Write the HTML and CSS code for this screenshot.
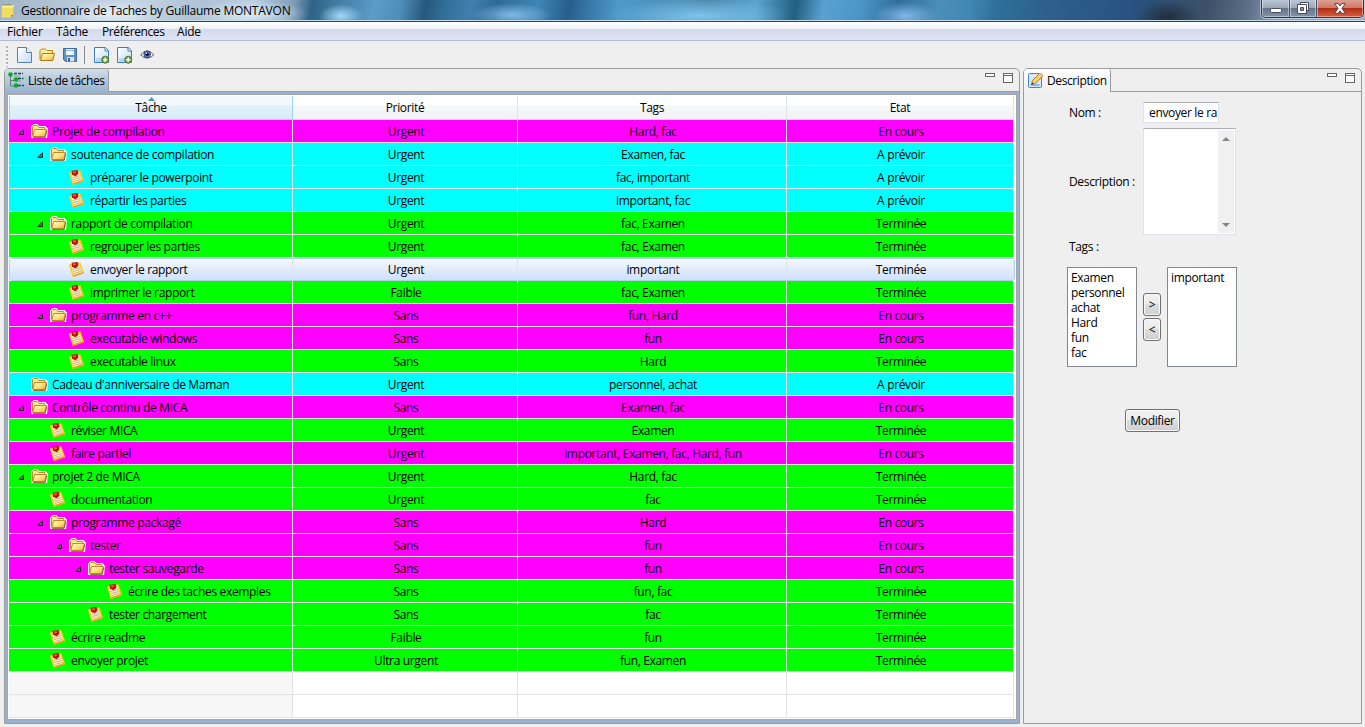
FILE: index.html
```html
<!DOCTYPE html>
<html lang="fr">
<head>
<meta charset="utf-8">
<title>Gestionnaire de Taches</title>
<link rel="stylesheet" href="styles.css">
</head>
<body>
<svg class="defs" width="0" height="0">
  <defs>
    <linearGradient id="gold" x1="0" y1="0" x2="1" y2="1"><stop offset="0" stop-color="#fffbd0"/><stop offset=".55" stop-color="#ffdf7a"/><stop offset="1" stop-color="#e5a92c"/></linearGradient>
    <linearGradient id="paper" x1="0" y1="0" x2="1" y2="1"><stop offset="0" stop-color="#fff"/><stop offset="1" stop-color="#c4dcf8"/></linearGradient>
    <symbol id="folder" viewBox="0 0 17 15">
      <path d="M.5 13.500V2.500L2.500.5h4l1.500 2h6.500l1.800 2-.6 9z" fill="#fff" stroke="#fff"/>
      <path d="M1.500 12V2.800L2.800 1.500h3.500L7.800 3.500h6V6" fill="#ffe98e" stroke="#bd8c2c"/>
      <path d="M1.700 12.500 3.600 5.500h11.800l-1.400 7z" fill="url(#gold)" stroke="#bd8c2c"/>
      <path d="M2.200 13.400h12l1.500-7" fill="none" stroke="#7a5a20" stroke-width=".9"/>
    </symbol>
    <symbol id="note" viewBox="0 0 15 15">
      <path d="M.9 3.200 10.800 1.200l3.300 9.500L4.300 14z" fill="#fff6d0" stroke="#ffc928" stroke-width="1.700"/>
      <path d="M4.300 14.200 14.200 10.700" stroke="#ef9a1a" stroke-width="1.400"/>
      <path d="m3.500 7.500 7.500-1.800M4.100 9.500l7.600-1.900M4.900 11.500l7.500-2.200" stroke="#b79d6b" stroke-width=".8"/>
      <path d="M2.600.8 8.600 0l.9 3.800-2.900 2.500-3.600-1.600z" fill="#b91305"/>
      <path d="M3.700 1.200h3l.4 1.800-2.600.6z" fill="#f05b36"/>
    </symbol>
    <symbol id="arrow" viewBox="0 0 6 6"><path d="M5.500.7v4.800H.9z" fill="#686868" stroke="#1c1c1c" stroke-width=".9"/></symbol>
    <symbol id="newtask" viewBox="0 0 17 17">
      <path d="M1.500.5h11l3 3v12h-14z" fill="url(#paper)" stroke="#3d7cc0"/>
      <path d="M12 .5v3.500h3.500" fill="#fff" stroke="#3d7cc0"/>
      <path d="M3 12h8M3 14h7" stroke="#8dbdf0"/>
      <circle cx="12.200" cy="12.700" r="3.500" fill="#6a9c3e" stroke="#4f7d32"/>
      <path d="M12.200 10.500v4.400M10 12.700h4.400" stroke="#fff" stroke-width="1.500"/>
    </symbol>
  </defs>
</svg>
<div class="window">
  <header class="titlebar">
    <svg class="app-icon" width="13" height="15" viewBox="0 0 13 15"><path d="M1 2h11.500l-.5 10-2 2.500H.5z" fill="#f3dc62"/><path d="M1 2h11.500v2.500H1z" fill="#fff0a0"/><path d="M10 14.500V12h2z" fill="#a98718"/><path d="M2 1v2M4 1v2M6 1v2M8 1v2M10 1v2" stroke="#a08a3a"/></svg>
    <span class="caption">Gestionnaire de Taches by Guillaume MONTAVON</span>
    <div class="controls">
      <span class="ctl min"><svg width="12" height="6"><rect x=".5" y=".5" width="11" height="4" rx="1" fill="#fff" stroke="#484d5c"/></svg></span>
      <span class="ctl max"><svg width="12" height="12"><path d="M3.500.5h8v8h-8z" fill="#fff" stroke="#484d5c"/><path d="M.5 2.500h9v9h-9z" fill="#fff" stroke="#484d5c"/><path d="M3.500 5.500h3v3h-3z" fill="#8694a7" stroke="#484d5c"/></svg></span>
      <span class="ctl close"><svg width="12" height="11"><path d="M.7.7h3.600L6 3 7.700.7h3.600L8 5.400l3.300 4.900H7.700L6 7.800l-1.700 2.500H.7L4 5.400z" fill="#fff" stroke="#57424c"/></svg></span>
    </div>
  </header>
  <nav class="menubar"><span class="m1">Fichier</span><span class="m2">Tâche</span><span class="m3">Préférences</span><span>Aide</span></nav>
  <div class="toolbar">
    <svg class="grip" width="3" height="21"><path d="M1 0v21" stroke="#b4b4b4" stroke-width="2" stroke-dasharray="2 2"/></svg>
    <svg class="tb-new" width="15" height="17"><path d="M.5.5h9l5 5v10H.5z" fill="url(#paper)" stroke="#5b7fa8"/><path d="M9.500.5v5h5" fill="#fff" stroke="#5b7fa8"/></svg>
    <svg class="tb-open" width="16" height="14"><path d="M1 11.500V2.500L2.500 1h4L8 2.500h5.500V5" fill="#ffefa2" stroke="#b8860b"/><path d="M1.500 12.500 3.500 5.500h12L13.800 12.500z" fill="url(#gold)" stroke="#b07d10"/></svg>
    <svg class="tb-save" width="15" height="15"><path d="M.5.5h13v13h-11l-2-2z" fill="#5f93c8" stroke="#3d6b9f"/><path d="M3 1h8v6H3z" fill="#eef4fa"/><path d="M3 2.500h8" stroke="#8bb4de"/><path d="M4 9h7v4.500H4z" fill="#dce3ea"/><path d="M5 10h2v3.500H5z" fill="#315c8c"/></svg>
    <i class="separator"></i>
    <svg class="tb-add" width="17" height="17"><use href="#newtask"/></svg>
    <svg class="tb-add2" width="17" height="17"><use href="#newtask"/></svg>
    <svg class="tb-eye" width="15" height="12"><path d="M.7 5.800Q7.200-2 13.800 5.800 7.200 12.500.7 5.800z" fill="#fff" stroke="#555"/><circle cx="7.200" cy="5.300" r="3.300" fill="#6d80cc" stroke="#323d85"/><circle cx="7.200" cy="5.300" r="1.700" fill="#080d30"/><circle cx="6.400" cy="4.200" r=".7" fill="#fff"/></svg>
  </div>
  <main class="workspace">
    <section class="view list-view">
      <div class="tabbar">
        <div class="tab"><svg width="16" height="16"><path d="M2.500 4v10H6M2.500 8.500H6" fill="none" stroke="#5f7f78"/><path d="M6 1.500h9M10 6.500h5.500M10 13.500h6" stroke="#174f4d" stroke-width="1.300" stroke-dasharray="3 1"/><path d="M6 4h6M10 9h3" stroke="#78a49c"/><circle cx="2.500" cy="2.500" r="2.300" fill="#12a52b"/><circle cx="8" cy="7.500" r="2.300" fill="#12a52b"/><circle cx="8" cy="13.500" r="2.300" fill="#12a52b"/></svg><span>Liste de tâches</span></div>
        <div class="view-buttons"><i class="vmin"></i><i class="vmax"></i></div>
      </div>
      <div class="frame"><div class="table">
        <div class="row head"><div class="sorted">Tâche<svg class="sort" width="7" height="4"><path d="M3.500 0 7 4H0z" fill="#5590ad"/></svg></div><div>Priorité</div><div>Tags</div><div>Etat</div></div>
        <div class="row doing"><div class="d0"><svg class="a"><use href="#arrow"/></svg><svg class="f"><use href="#folder"/></svg>Projet de compilation</div><div>Urgent</div><div>Hard, fac</div><div>En cours</div></div>
        <div class="row todo"><div class="d1"><svg class="a"><use href="#arrow"/></svg><svg class="f"><use href="#folder"/></svg>soutenance de compilation</div><div>Urgent</div><div>Examen, fac</div><div>A prévoir</div></div>
        <div class="row todo"><div class="d2"><svg class="n"><use href="#note"/></svg>préparer le powerpoint</div><div>Urgent</div><div>fac, important</div><div>A prévoir</div></div>
        <div class="row todo"><div class="d2"><svg class="n"><use href="#note"/></svg>répartir les parties</div><div>Urgent</div><div>important, fac</div><div>A prévoir</div></div>
        <div class="row done"><div class="d1"><svg class="a"><use href="#arrow"/></svg><svg class="f"><use href="#folder"/></svg>rapport de compilation</div><div>Urgent</div><div>fac, Examen</div><div>Terminée</div></div>
        <div class="row done"><div class="d2"><svg class="n"><use href="#note"/></svg>regrouper les parties</div><div>Urgent</div><div>fac, Examen</div><div>Terminée</div></div>
        <div class="row selected"><div class="d2"><svg class="n"><use href="#note"/></svg>envoyer le rapport</div><div>Urgent</div><div>important</div><div>Terminée</div></div>
        <div class="row done"><div class="d2"><svg class="n"><use href="#note"/></svg>imprimer le rapport</div><div>Faible</div><div>fac, Examen</div><div>Terminée</div></div>
        <div class="row doing"><div class="d1"><svg class="a"><use href="#arrow"/></svg><svg class="f"><use href="#folder"/></svg>programme en c++</div><div>Sans</div><div>fun, Hard</div><div>En cours</div></div>
        <div class="row doing"><div class="d2"><svg class="n"><use href="#note"/></svg>executable windows</div><div>Sans</div><div>fun</div><div>En cours</div></div>
        <div class="row done"><div class="d2"><svg class="n"><use href="#note"/></svg>executable linux</div><div>Sans</div><div>Hard</div><div>Terminée</div></div>
        <div class="row todo"><div class="d0"><svg class="f"><use href="#folder"/></svg>Cadeau d'anniversaire de Maman</div><div>Urgent</div><div>personnel, achat</div><div>A prévoir</div></div>
        <div class="row doing"><div class="d0"><svg class="a"><use href="#arrow"/></svg><svg class="f"><use href="#folder"/></svg>Contrôle continu de MICA</div><div>Sans</div><div>Examen, fac</div><div>En cours</div></div>
        <div class="row done"><div class="d1"><svg class="n"><use href="#note"/></svg>réviser MICA</div><div>Urgent</div><div>Examen</div><div>Terminée</div></div>
        <div class="row doing"><div class="d1"><svg class="n"><use href="#note"/></svg>faire partiel</div><div>Urgent</div><div>important, Examen, fac, Hard, fun</div><div>En cours</div></div>
        <div class="row done"><div class="d0"><svg class="a"><use href="#arrow"/></svg><svg class="f"><use href="#folder"/></svg>projet 2 de MICA</div><div>Urgent</div><div>Hard, fac</div><div>Terminée</div></div>
        <div class="row done"><div class="d1"><svg class="n"><use href="#note"/></svg>documentation</div><div>Urgent</div><div>fac</div><div>Terminée</div></div>
        <div class="row doing"><div class="d1"><svg class="a"><use href="#arrow"/></svg><svg class="f"><use href="#folder"/></svg>programme packagé</div><div>Sans</div><div>Hard</div><div>En cours</div></div>
        <div class="row doing"><div class="d2"><svg class="a"><use href="#arrow"/></svg><svg class="f"><use href="#folder"/></svg>tester</div><div>Sans</div><div>fun</div><div>En cours</div></div>
        <div class="row doing"><div class="d3"><svg class="a"><use href="#arrow"/></svg><svg class="f"><use href="#folder"/></svg>tester sauvegarde</div><div>Sans</div><div>fun</div><div>En cours</div></div>
        <div class="row done"><div class="d4"><svg class="n"><use href="#note"/></svg>écrire des taches exemples</div><div>Sans</div><div>fun, fac</div><div>Terminée</div></div>
        <div class="row done"><div class="d3"><svg class="n"><use href="#note"/></svg>tester chargement</div><div>Sans</div><div>fac</div><div>Terminée</div></div>
        <div class="row done"><div class="d1"><svg class="n"><use href="#note"/></svg>écrire readme</div><div>Faible</div><div>fun</div><div>Terminée</div></div>
        <div class="row done"><div class="d1"><svg class="n"><use href="#note"/></svg>envoyer projet</div><div>Ultra urgent</div><div>fun, Examen</div><div>Terminée</div></div>
        <div class="row empty"><div></div><div></div><div></div><div></div></div>
        <div class="row empty"><div></div><div></div><div></div><div></div></div>
      </div></div>
    </section>
    <section class="view detail-view">
      <div class="tabbar">
        <div class="tab"><svg width="16" height="16"><rect x=".5" y="1.500" width="13" height="14" rx="1" fill="#d6eafc" stroke="#3f83d0"/><path d="M2.500 13h9" stroke="#78bdf5" stroke-width="2"/><path d="m3.500 12.500 1-4L12 1l3 2.800-7.500 7.500z" fill="#f8cf63" stroke="#a97a35"/><path d="m11 2 1.200-1.200 3 2.800L14 5z" fill="#efb49c"/><path d="m3.500 12.500.6-2 1.500 1.400z" fill="#222"/></svg><span>Description</span></div>
        <div class="view-buttons"><i class="vmin"></i><i class="vmax"></i></div>
      </div>
      <div class="form">
        <div class="field name-field"><label>Nom :</label><div class="input">envoyer le ra</div></div>
        <div class="field desc-field"><label>Description :</label><div class="textarea"><div class="scroll"><svg width="8" height="4"><path d="M4 0 8 4H0z" fill="#858585"/></svg><svg width="8" height="4"><path d="M0 0h8L4 4z" fill="#858585"/></svg></div></div></div>
        <div class="tags-label">Tags :</div>
        <div class="pickers">
          <ul class="listbox"><li>Examen</li><li>personnel</li><li>achat</li><li>Hard</li><li>fun</li><li>fac</li></ul>
          <div class="movers"><div class="btn">&gt;</div><div class="btn">&lt;</div></div>
          <ul class="listbox"><li>important</li></ul>
        </div>
        <div class="btn submit">Modifier</div>
      </div>
    </section>
  </main>
</div>
</body>
</html>
```
FILE: styles.css
```css
* { box-sizing: border-box; }
body { margin: 0; background: #efefef; color: #000; font: 12px/15px "Open Sans", "Noto Sans", sans-serif; letter-spacing: -0.34px; }
svg { display: block; flex: none; }
.defs { position: absolute; }
.window { width: 1365px; height: 727px; display: flex; flex-direction: column; overflow: hidden; white-space: nowrap; }

.titlebar {
  height: 22px; display: flex; align-items: flex-start; padding-left: 1px;
  border-bottom: 1px solid #2f4459; box-shadow: inset 0 -1px #c5dbea;
  background:
    radial-gradient(ellipse 60px 14px at 250px 14px, rgba(225,240,252,.8), rgba(225,240,252,0)),
    radial-gradient(ellipse 50px 14px at 110px 14px, rgba(235,243,250,.8), rgba(235,243,250,0)),
    radial-gradient(ellipse 22px 12px at 341px 16px, #a5d8f8, rgba(165,216,248,0)),
    radial-gradient(ellipse 40px 12px at 512px 15px, #82b9e5, rgba(130,185,229,0)),
    radial-gradient(ellipse 90px 18px at 700px 16px, #7cc4ee, rgba(124,196,238,0)),
    radial-gradient(ellipse 32px 14px at 905px 16px, #84b7ea, rgba(132,183,234,0)),
    radial-gradient(ellipse 32px 16px at 1168px 17px, #222e3e, rgba(34,46,62,0)),
    linear-gradient(100deg, #a0b4c6 0, #b3c6d8 60px, #c6d6e5 130px, #aec2d6 200px, #b9cde0 250px, #7f9db8 290px, #2d6487 308px, #3f7aa0 330px, #5b9cc8 370px, #4f8dba 396px, #25597a 420px, #316f9b 440px, #427fae 465px, #2f6a94 490px, #3f86b5 530px, #265f8c 562px, #3a7cac 585px, #4c99c9 610px, #4c8fb8 660px, #4b83a5 700px, #5aa5d0 745px, #235f80 785px, #5aa0d2 812px, #4b94c8 850px, #2f6e98 885px, #4a8fb8 925px, #4288b6 955px, #2c6f98 985px, #2f608c 1030px, #285383 1110px, #2d4e72 1140px, #3d5068 1190px, #5c6e86 1230px, #8aa0b8 1262px, #a0b4ca 1365px);
}
.app-icon { margin-top: 3px; }
.caption { margin: 3px 0 0 7px; letter-spacing: -.23px; }
.controls { margin: 0 1px 0 auto; display: flex; height: 18px; border: 1px solid #2e3947; border-top: 0; border-radius: 0 0 5px 5px; overflow: hidden; box-shadow: 0 0 0 1px rgba(220,233,245,.6); }
.ctl { display: flex; align-items: center; justify-content: center; border-left: 1px solid #46536a; box-shadow: inset 1px 0 rgba(255,255,255,.45), inset -1px -1px rgba(255,255,255,.4); background: linear-gradient(#bac6d3 0, #9aa9ba 47%, #65758b 50%, #8295ad 100%); }
.ctl.min { width: 27px; border-left: 0; padding-top: 4px; }
.ctl.max { width: 27px; padding-bottom: 1px; }
.ctl.close { width: 47px; padding-bottom: 1px; background: linear-gradient(#dba092 0, #cf7764 47%, #b52d17 50%, #d6603f 100%); }

.menubar { height: 19px; display: flex; padding: 2px 0 0 7px; letter-spacing: -.2px; border-bottom: 1px solid #b5bbcf; background: linear-gradient(#fff 0, #eef1f7 37%, #d4daed 40%, #dfe4f5 100%); }
.m1 { width: 49px; } .m2 { width: 46px; } .m3 { width: 75px; letter-spacing: -.4px; }

.toolbar { height: 27px; display: flex; align-items: flex-start; }
.grip { margin: 5px 0 0 6px; }
.tb-new { margin: 6px 0 0 8px; }
.tb-open { margin: 7px 0 0 7px; }
.tb-save { margin: 7px 0 0 8px; }
.separator { width: 1px; height: 18px; margin: 5px 0 0 6px; background: #8b8b8b; }
.tb-add { margin: 6px 0 0 8px; }
.tb-add2 { margin: 6px 0 0 6px; }
.tb-eye { margin: 8px 0 0 7px; }

.workspace { display: grid; grid-template-columns: 1016px 339px; column-gap: 3px; padding-left: 4px; height: 656px; }
.view { display: flex; flex-direction: column; border: 1px solid #9c9c9c; border-radius: 5px 5px 0 0; }
.tabbar { display: flex; justify-content: space-between; height: 23px; border-bottom: 1px solid #9c9c9c; }
.tab { display: flex; align-items: center; height: 23px; border-right: 1px solid #9c9c9c; border-radius: 4px 3px 0 0; padding: 1px 0 2px 3px; }
.tab span { padding-top: 1px; }
.list-view .tab { width: 104px; gap: 4px; letter-spacing: -.42px; background: linear-gradient(#d2dde9, #9ab3d0); }
.detail-view .tab { width: 87px; gap: 4px; letter-spacing: -.4px; background: linear-gradient(#fff, #efefef); }
.detail-view .tab svg { margin-left: 1px; margin-right: -1px; }
.view-buttons { display: flex; gap: 8px; padding: 4px 6px 0 0; }
.vmin { width: 10px; height: 4px; background: #fff; border: 1px solid #666; }
.vmax { width: 10px; height: 10px; background: #fff; border: 1px solid #666; box-shadow: inset 0 1px #fff, inset 0 2px #666; }

.frame { flex: 1; background: #99b1cd; padding: 2px 2px 3px; }
.table { height: 626px; border: 1px solid #a6a6a6; padding: 1px 0 0 1px; background: #fff; }
.row { width: 1005px; height: 23px; display: grid; grid-template-columns: 284px 225px 269px 227px; }
.row > div { display: flex; align-items: center; justify-content: center; border-right: 1px solid #e3e3e3; border-bottom: 1px solid #e3e3e3; padding: 1px 0 0 2px; }
.row > div:first-child { justify-content: flex-start; padding-left: var(--indent, 0); }
.row.head { height: 24px; }
.row.head > div { padding: 0; border-bottom: 1px solid #d5d5d5; background: linear-gradient(#fff 0, #fff 40%, #f7f8fa 42%, #f1f2f4 100%); }
.row.head > .sorted { position: relative; justify-content: center; border: 1px solid #96d9f9; border-top: 0; background: linear-gradient(#f2f9fc 0, #f2f9fc 40%, #e1f1f9 42%, #d8ecf6 100%); }
.sort { position: absolute; top: 1px; left: 138px; }
.doing > div { background: #f0f; }
.todo > div { background: #0ff; }
.done > div { background: #0f0; }
.selected { width: 1006px; border: 1px solid #b4cfee; border-radius: 3px; background: linear-gradient(#f4f8fe, #cfe1fb); grid-template-columns: 283px 225px 269px 227px; }
.row.selected > div { border-bottom: 0; border-right-color: #dbe5f2; padding-top: 0; }
.row.selected > div:first-child { margin-left: -1px; }
.empty > div:first-child { background: #f7f7f7; }
.d0 { --indent: 9px; } .d1 { --indent: 28px; } .d2 { --indent: 47px; } .d3 { --indent: 66px; } .d4 { --indent: 85px; }
.a { width: 6px; height: 6px; margin: 1px -6px 0 0; }
.f { width: 17px; height: 15px; margin: -1px 4px 0 13px; }
.n { width: 15px; height: 15px; margin: -1px 6px 0 13px; }

.form { padding-left: 43px; }
.field { display: grid; grid-template-columns: 74px auto; align-items: center; justify-content: start; padding-left: 2px; }
.name-field { padding-top: 10px; }
.input { width: 76px; height: 21px; padding: 2px 0 0 5px; overflow: hidden; background: #fff; border: 1px solid #e2e3ea; border-top-color: #abadb3; border-radius: 1px; }
.desc-field { margin-top: 5px; }
.textarea { width: 93px; height: 107px; background: #fff; border: 1px solid #e2e3ea; border-top-color: #abadb3; display: flex; justify-content: flex-end; padding: 1px; }
.scroll { width: 16px; background: #f0f0f0; display: flex; flex-direction: column; align-items: center; justify-content: space-between; padding: 7px 0 6px; }
.tags-label { margin: 4px 0 0 2px; }
.pickers { display: flex; margin-top: 13px; }
.listbox { list-style: none; margin: 0; width: 70px; height: 100px; padding: 2px 0 0 3px; background: #fff; border: 1px solid #828790; }
.movers { width: 30px; display: flex; flex-direction: column; align-items: center; gap: 2px; padding-top: 26px; }
.btn { display: flex; align-items: center; justify-content: center; width: 18px; height: 23px; border: 1px solid #707070; border-radius: 3px; box-shadow: inset 0 0 0 1px #fafafa; background: linear-gradient(#f2f2f2 0, #ebebeb 48%, #dddddd 50%, #cfcfcf 100%); }
.submit { width: 55px; margin: 42px 0 0 58px; }
```
